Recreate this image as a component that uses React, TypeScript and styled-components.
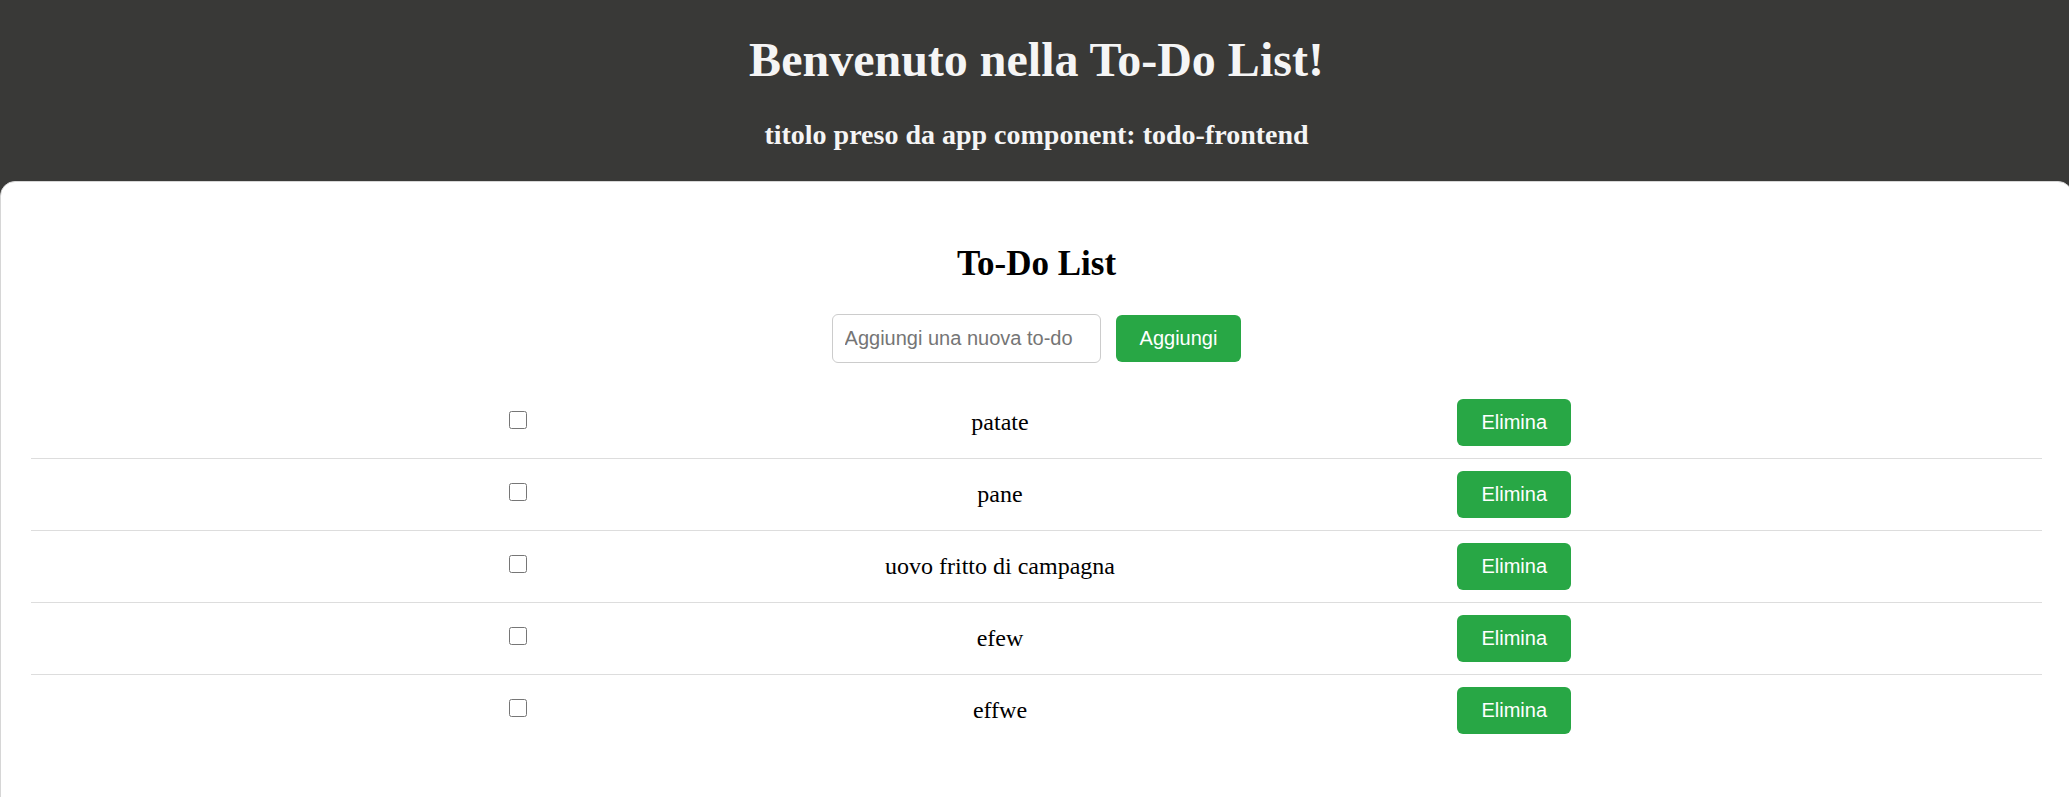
import React from "react";
import styled, { createGlobalStyle } from "styled-components";

const GlobalStyle = createGlobalStyle`
  html, body {
    margin: 0;
    padding: 0;
    overflow: hidden;
    background: #393937;
  }
  body {
    font-family: "Liberation Serif", "Times New Roman", serif;
  }
`;

const Page = styled.div`
  width: calc(100% + 4px);
  min-height: 100vh;
  background: #393937;
`;

const Header = styled.header`
  padding: 32px 0 30px;
  text-align: center;
  color: #f5f5f5;
`;

const Title = styled.h1`
  margin: 0 0 31px;
  font-size: 48px;
  line-height: 56px;
  font-weight: 700;
`;

const Subtitle = styled.h3`
  margin: 0;
  font-size: 28px;
  line-height: 32px;
  font-weight: 700;
`;

const Card = styled.main`
  background: #ffffff;
  border: 1px solid #d6d6d6;
  border-radius: 15px;
  padding: 30px 30px 65px;
`;

const CardTitle = styled.h2`
  margin: 32px 0 30px;
  text-align: center;
  font-size: 35px;
  line-height: 40px;
  font-weight: 700;
  color: #000;
`;

const AddForm = styled.form`
  display: flex;
  justify-content: center;
  align-items: center;
  gap: 15px;
  margin: 0 0 24px;
`;

const TextInput = styled.input`
  box-sizing: border-box;
  width: 269px;
  height: 49px;
  padding: 0 12px;
  border: 1px solid #cccccc;
  border-radius: 6px;
  font-family: "Liberation Sans", Arial, sans-serif;
  font-size: 20px;
  color: #222;
  outline: none;
  &::placeholder {
    color: #757575;
  }
`;

const GreenButton = styled.button`
  box-sizing: border-box;
  height: 47px;
  padding: 0 24px;
  border: none;
  border-radius: 6px;
  background: #28a745;
  color: #ffffff;
  font-family: "Liberation Sans", Arial, sans-serif;
  font-size: 20px;
  cursor: pointer;
  white-space: nowrap;
`;

const TodoList = styled.ul`
  list-style: none;
  margin: 0;
  padding: 0;
`;

const TodoRow = styled.li`
  padding: 12px 0 12px 7px;
  border-bottom: 1px solid #dddddd;
  &:last-child {
    border-bottom: none;
  }
`;

const RowInner = styled.div`
  width: 1062px;
  margin: 0 auto;
  display: grid;
  grid-template-columns: 34px 1fr 114px;
  align-items: center;
`;

const Check = styled.input`
  width: 18px;
  height: 18px;
  margin: 0 0 5px 0;
`;

const TodoText = styled.span`
  text-align: center;
  font-size: 24px;
  color: #000;
`;

const DeleteButton = styled(GreenButton)`
  justify-self: end;
`;

const todos = ["patate", "pane", "uovo fritto di campagna", "efew", "effwe"];

export default function App() {
  return (
    <Page>
      <GlobalStyle />
      <Header>
        <Title>Benvenuto nella To-Do List!</Title>
        <Subtitle>titolo preso da app component: todo-frontend</Subtitle>
      </Header>
      <Card>
        <CardTitle>To-Do List</CardTitle>
        <AddForm onSubmit={(e) => e.preventDefault()}>
          <TextInput type="text" placeholder="Aggiungi una nuova to-do" />
          <GreenButton type="submit">Aggiungi</GreenButton>
        </AddForm>
        <TodoList>
          {todos.map((t) => (
            <TodoRow key={t}>
              <RowInner>
                <Check type="checkbox" />
                <TodoText>{t}</TodoText>
                <DeleteButton type="button">Elimina</DeleteButton>
              </RowInner>
            </TodoRow>
          ))}
        </TodoList>
      </Card>
    </Page>
  );
}
